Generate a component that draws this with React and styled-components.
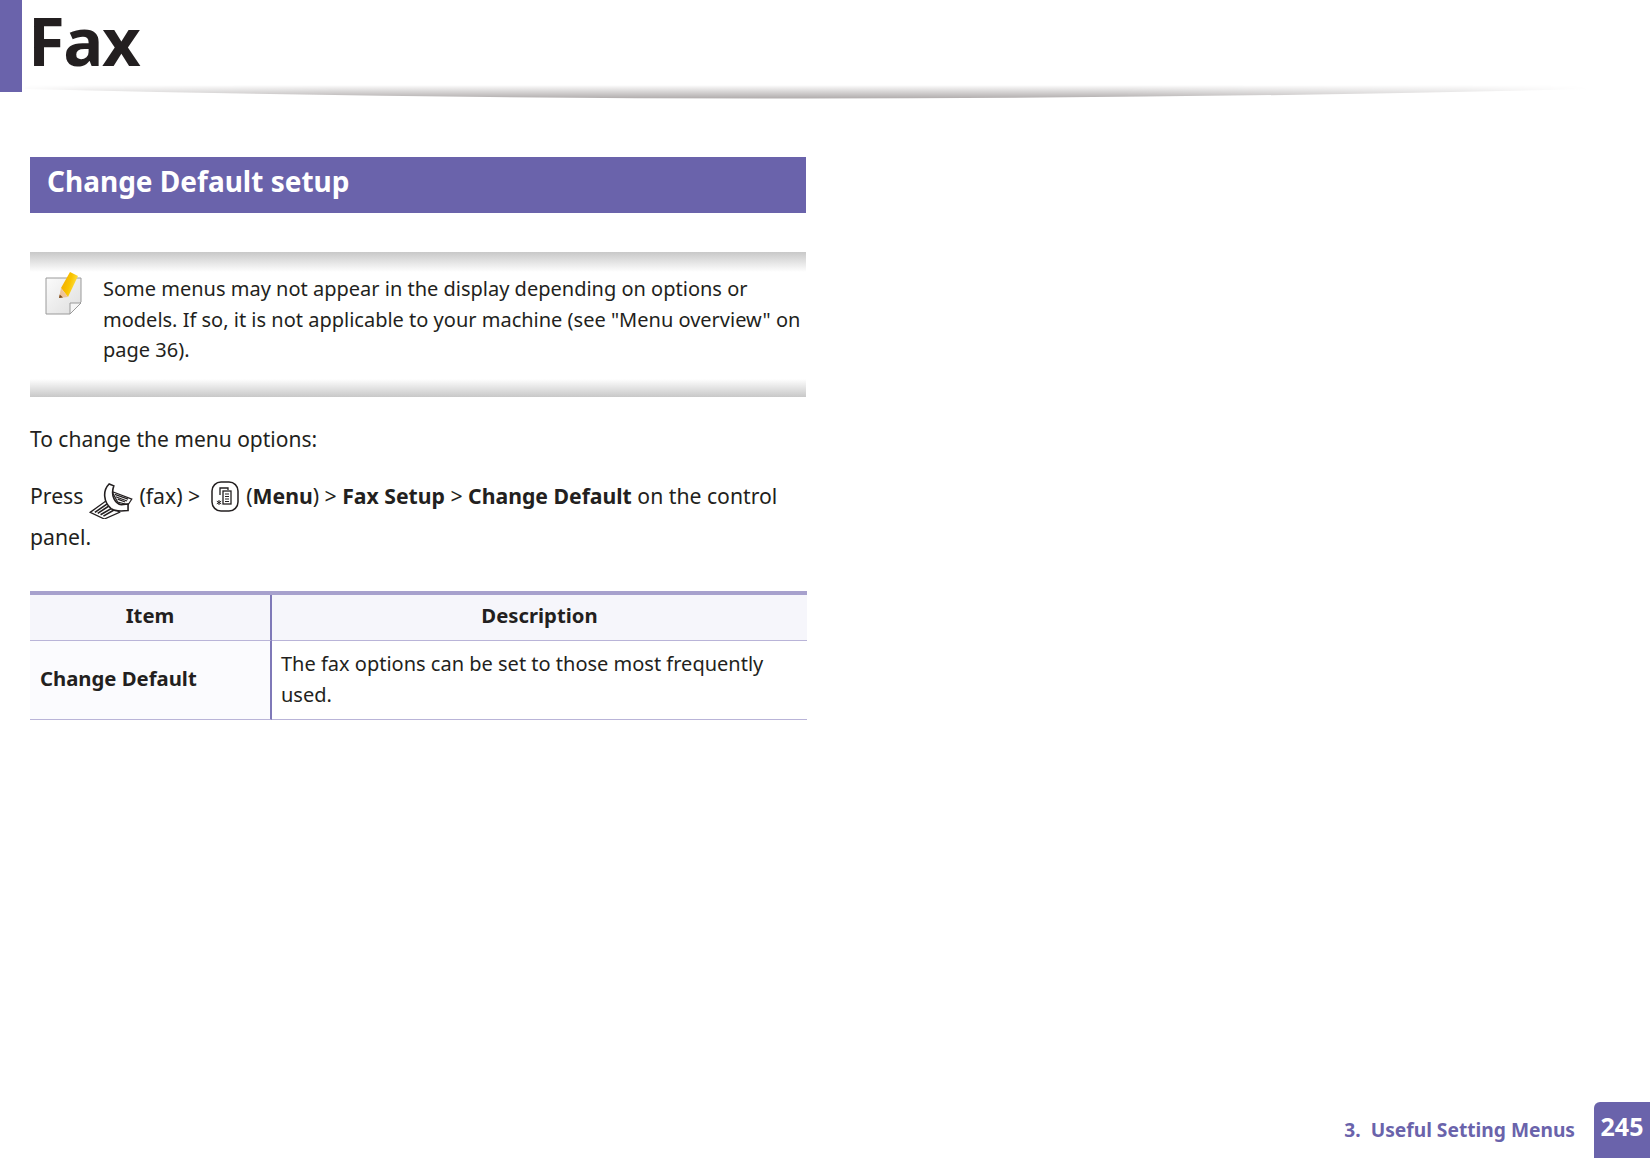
import React from "react";
import styled, { createGlobalStyle } from "styled-components";

const Global = createGlobalStyle`
  html, body { margin: 0; padding: 0; background: #fff; }
  body { font-family: "Noto Sans", "Open Sans", sans-serif; color: #231f20; }
`;
const Page = styled.div`
  width: 1650px; height: 1158px; position: relative; overflow: hidden;
  display: flex; flex-direction: column;
`;
const Header = styled.header`
  display: flex; height: 92px; position: relative; flex: none;
`;
const HeaderTab = styled.div`width: 22px; background: #6a63ab;`;
const Title = styled.h1`
  margin: 0 0 0 6px; font-size: 67px; line-height: 80px; height: 80px; font-weight: 700; letter-spacing: -1.5px; color: #231f20;
`;
const HeaderRule = styled.svg`
  position: absolute; left: 0; top: 80px;
`;
const Main = styled.main`
  width: 776px; margin: 65px 0 0 30px; flex: 1;
`;
const SectionBar = styled.h2`
  margin: 0; height: 56px; background: #6a63ab; color: #fff; padding: 6px 0 0 17px; box-sizing: border-box;
  font-size: 28px; line-height: 36px; font-weight: 700;
`;
const Note = styled.section`
  margin-top: 39px; display: flex; height: 145px; box-sizing: border-box; padding: 22px 0 0 0;
  background:
    linear-gradient(#c8c8c8, #ffffff) top / 100% 20px no-repeat,
    linear-gradient(#ffffff, #c8c8c8) bottom / 100% 18px no-repeat;
`;
const NoteIconBox = styled.div`width: 73px; flex: none; padding: 0 0 0 15px; margin-top: -2px; box-sizing: border-box;`;
const NoteText = styled.p`
  margin: 0; font-size: 20px; line-height: 30.5px;
`;
const Para = styled.p`
  margin: ${p => p.$top}px 0 0; font-size: ${p => p.$size}px; line-height: ${p => p.$lh}px;
`;
const Bold = styled.b`font-weight: 700;`;
const InlineIcon = styled.svg`
  margin: -${p => p.$above}px ${p => p.$right}px -${p => p.$below}px ${p => p.$left}px;
`;
const Table = styled.div`
  margin-top: 34px; width: 777px; border-top: 4px solid #a7a1cd;
  display: grid; grid-template-columns: 242px 1fr;
`;
const HeadCell = styled.div`
  height: 46px; background: #f6f6fb; border-bottom: 1px solid #b9b4d8; box-sizing: border-box;
  display: flex; align-items: center; justify-content: center; padding-bottom: 5px;
  font-size: 20.3px; font-weight: 700;
  ${p => p.$first && "border-right: 2px solid #7f79b8;"}
`;
const BodyCell = styled.div`
  height: 79px; box-sizing: border-box; border-bottom: 1px solid #b9b4d8;
  ${p => p.$first && "border-right: 2px solid #7f79b8; background: #fbfbfe; font-weight: 700; display:flex; align-items:center;"}
  padding: ${p => (p.$first ? "0 0 4px 10px" : "8px 10px 0 9px")};
  font-size: ${p => (p.$first ? 20.3 : 20)}px; line-height: 30.5px;
`;
const Footer = styled.footer`
  display: flex; justify-content: flex-end; align-items: center; height: 56px; flex: none;
`;
const Crumb = styled.span`
  color: #6a63ab; font-size: 19.2px; font-weight: 700; margin-right: 19px; margin-bottom: 2px; white-space: pre;
`;
const PageNo = styled.div`
  width: 56px; height: 56px; background: #6a63ab; color: #fff; border-radius: 6px 0 0 0; box-sizing: border-box;
  font-size: 25px; font-weight: 700; text-align: center; line-height: 48px;
`;

const RuleLine = () => (
  <HeaderRule width="1650" height="30" viewBox="0 0 1650 30">
    <defs>
      <linearGradient id="rv" x1="0" y1="5" x2="0" y2="18" gradientUnits="userSpaceOnUse">
        <stop offset="0" stopColor="#ffffff"/><stop offset="0.45" stopColor="#dcdada"/><stop offset="1" stopColor="#b3afaf"/>
      </linearGradient>
      <linearGradient id="rh" x1="25" y1="0" x2="1590" y2="0" gradientUnits="userSpaceOnUse">
        <stop offset="0" stopColor="#222"/><stop offset="0.04" stopColor="#999"/><stop offset="0.2" stopColor="#fff"/>
        <stop offset="0.7" stopColor="#fff"/><stop offset="0.92" stopColor="#888"/><stop offset="1" stopColor="#000"/>
      </linearGradient>
      <mask id="rm" maskUnits="userSpaceOnUse" x="0" y="0" width="1650" height="30">
        <rect x="0" y="0" width="1650" height="30" fill="url(#rh)"/>
      </mask>
    </defs>
    <path d="M25 9Q800 28 1590 9L1590 5L25 5Z" fill="url(#rv)" mask="url(#rm)"/>
  </HeaderRule>
);

const NoteIcon = () => (
  <svg width="38" height="44" viewBox="0 0 38 44">
    <defs>
      <linearGradient id="pg" x1="0" y1="0" x2="1" y2="1"><stop offset="0" stopColor="#fbfbfb"/><stop offset="1" stopColor="#dedede"/></linearGradient>
      <linearGradient id="pc" x1="0" y1="0" x2="1" y2="0.4"><stop offset="0" stopColor="#f0a400"/><stop offset="0.6" stopColor="#f9c400"/><stop offset="1" stopColor="#ffe24a"/></linearGradient>
    </defs>
    <path d="M1 6H36V30L25 42H1Z" fill="url(#pg)" stroke="#9a9a9a" strokeWidth="1"/>
    <path d="M25 42V31H36Z" fill="#f6f6f6" stroke="#9a9a9a" strokeWidth="1"/>
    <path d="M16 16L25 0L33 4L23 25Z" fill="url(#pc)"/>
    <path d="M16 16L14 26L23 25Z" fill="#eec39a"/>
    <path d="M14.7 22.5L14 26L18 25.6Z" fill="#7a4a1c"/>
  </svg>
);
const FaxIcon = () => (
  <InlineIcon $above={21} $below={15} $left={6} $right={6} width="44" height="36" viewBox="0 0 46 38" fill="none" stroke="#231f20" strokeWidth="1.2">
    <path d="M1 31L19 18L32 31L16 38Z" fill="#fff" strokeWidth="1.4"/>
    <path d="M6 31L19 22M9 32L22 23.5M12 33.5L25 26M15 35L27 28" strokeWidth="1.7"/>
    <path d="M24 9L45 17L41 23L30 20Z" fill="#fff"/>
    <path d="M27 12L41 17M28 14.5L40 19M30 17L38 20" strokeWidth="1.2"/>
    <path d="M21 1C14 8 15 20 23 27C27 30 33 30 41 29L41 22L34 23C28 22 22 14 26 3Z" fill="#fff" strokeWidth="1.7"/>
  </InlineIcon>
);
const MenuIcon = () => (
  <InlineIcon $above={23} $below={8} $left={11} $right={7} width="28" height="31" viewBox="0 0 28 31" fill="none" stroke="#231f20">
    <rect x="1" y="1" width="26" height="29" rx="9" strokeWidth="1.5"/>
    <path d="M9 14V7H17V9" strokeWidth="1.3"/>
    <rect x="12" y="10" width="8" height="13" strokeWidth="1.3"/>
    <path d="M14 13H18M14 15.5H18M14 18H18M14 20.5H18" strokeWidth="1.1"/>
    <path d="M8 19V24M5.8 20.2L10.2 22.8M10.2 20.2L5.8 22.8" strokeWidth="1"/>
  </InlineIcon>
);

export default function App() {
  return (
    <Page>
      <Global />
      <Header>
        <HeaderTab />
        <Title>Fax</Title>
        <RuleLine />
      </Header>
      <Main>
        <SectionBar>Change Default setup</SectionBar>
        <Note>
          <NoteIconBox><NoteIcon /></NoteIconBox>
          <NoteText>Some menus may not appear in the display depending on options or models. If so, it is not applicable to your machine (see "Menu overview" on page 36).</NoteText>
        </Note>
        <Para $top={27} $lh={30} $size={21}>To change the menu options:</Para>
        <Para $top={21} $lh={41} $size={21.2}>
          Press<FaxIcon />(fax) &gt;<MenuIcon />(<Bold>Menu</Bold>) &gt; <Bold>Fax Setup</Bold> &gt; <Bold>Change Default</Bold> on the control panel.
        </Para>
        <Table>
          <HeadCell $first>Item</HeadCell>
          <HeadCell>Description</HeadCell>
          <BodyCell $first>Change Default</BodyCell>
          <BodyCell>The fax options can be set to those most frequently used.</BodyCell>
        </Table>
      </Main>
      <Footer>
        <Crumb>3.  Useful Setting Menus</Crumb>
        <PageNo>245</PageNo>
      </Footer>
    </Page>
  );
}
